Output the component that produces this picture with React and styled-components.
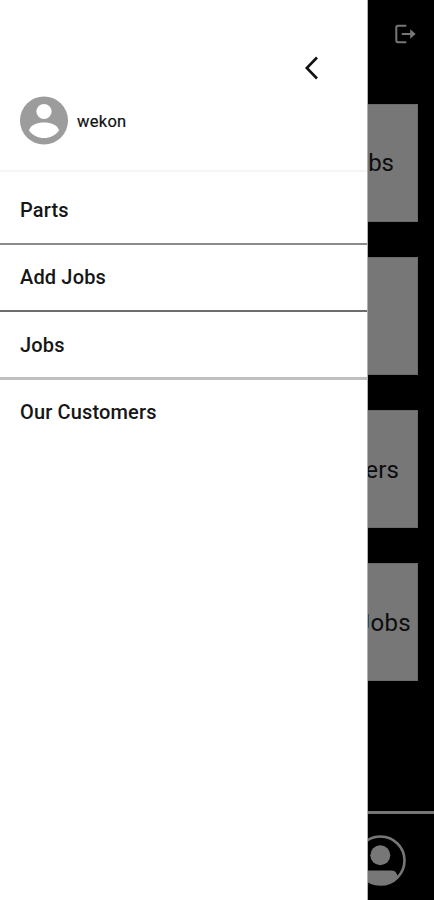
import React from "react";
import styled, { createGlobalStyle } from "styled-components";

const GlobalStyle = createGlobalStyle`
  * { box-sizing: border-box; }
  body { margin: 0; background: #000; font-family: Roboto, "Liberation Sans", sans-serif; }
`;

const Screen = styled.div`
  display: grid;
  grid-template-columns: 368px 66px;
  width: 434px;
  height: 900px;
  overflow: hidden;
`;

const Drawer = styled.nav`
  display: flex;
  flex-direction: column;
  background: #fff;
  border-right: 1px solid #b0b0b0;
`;

const DrawerTop = styled.div`
  display: flex;
  justify-content: flex-end;
  height: 96px;
  padding: 56px 47px 0 0;
`;

const Profile = styled.div`
  display: flex;
  align-items: flex-start;
  gap: 9px;
  height: 76px;
  padding-left: 20px;
  border-bottom: 2px solid #f5f5f5;
`;

const UserName = styled.span`
  font-size: 16.5px;
  line-height: 51px;
  letter-spacing: 0.3px;
  color: #111;
  -webkit-text-stroke: 0.2px #111;
`;

const MenuItem = styled.a`
  display: flex;
  align-items: center;
  height: ${(p) => p.$height}px;
  padding: ${(p) => p.$top || 0}px 0 ${(p) => p.$bottom || 0}px 20px;
  border-bottom: ${(p) => p.$line || "none"};
  font-size: 20px;
  font-weight: 500;
  letter-spacing: 0.15px;
  color: #161616;
`;

const Backdrop = styled.main`
  display: flex;
  flex-direction: column;
  overflow: hidden;
  background: #000;
`;

const Header = styled.header`
  display: flex;
  flex: none;
  height: 104px;
  padding: 24px 0 0 27px;
`;

const Cards = styled.div`
  display: flex;
  flex: none;
  flex-direction: column;
  gap: 35px;
  height: 707px;
  width: 50px;
`;

const Card = styled.div`
  display: flex;
  flex: none;
  align-items: center;
  justify-content: flex-end;
  height: 118px;
  padding: ${(p) => p.$top || 0}px ${(p) => p.$end}px 0 0;
  overflow: hidden;
  background: #777;
  border: 1px solid #6b6b6b;
  border-left: 0;
  color: #0c0c0c;
  font-size: 24px;
  letter-spacing: ${(p) => p.$spacing || 0}px;
`;

const Footer = styled.footer`
  display: flex;
  flex: 1;
  align-items: flex-start;
  padding-top: 21px;
  border-top: 3px solid #757575;
`;

const Icon = styled.svg`
  display: block;
  flex: none;
  margin-left: ${(p) => p.$shift || 0}px;
`;

const items = [
  { label: "Parts", height: 73, top: 5, line: "2px solid #8c8c8c" },
  { label: "Add Jobs", height: 67, bottom: 1, line: "2px solid #6c6c6c" },
  { label: "Jobs", height: 68, line: "3px solid #c0c0c0" },
  { label: "Our Customers", height: 64, bottom: 1 },
];

const cards = [
  { label: "bs", end: 23 },
  { label: "", end: 0 },
  { label: "ers", end: 18, spacing: 0.15, top: 1 },
  { label: "Jobs", end: 6, spacing: 0.3, top: 1 },
];

export default function App() {
  return (
    <Screen>
      <GlobalStyle />
      <Drawer>
        <DrawerTop>
          <Icon width="16" height="24" viewBox="0 0 16 24" fill="none" stroke="#111" strokeWidth="2.6">
            <path d="M13 1.5 2.8 12 13 22.5" />
          </Icon>
        </DrawerTop>
        <Profile>
          <Icon width="48" height="49" viewBox="0 0 48 49">
            <circle cx="24" cy="24.5" r="24" fill="#9c9c9c" />
            <circle cx="24" cy="15.5" r="7.6" fill="#fff" />
            <path d="M9 34.4C10.5 29 17 26.6 24 26.6S37.5 29 39 34.4C35.5 39.2 30 42 24 42S12.5 39.2 9 34.4Z" fill="#fff" />
          </Icon>
          <UserName>wekon</UserName>
        </Profile>
        {items.map((item) => (
          <MenuItem key={item.label} $height={item.height} $top={item.top} $bottom={item.bottom} $line={item.line}>
            {item.label}
          </MenuItem>
        ))}
      </Drawer>
      <Backdrop>
        <Header>
          <Icon width="22" height="20" viewBox="0 0 22 20" fill="none" stroke="#777" strokeWidth="2">
            <path d="M11.3 1.7H3Q1.3 1.7 1.3 3.4V16.6Q1.3 18.3 3 18.3H11.3M6.8 10H18" />
            <path d="M15.2 5.2 20.7 10 15.2 14.8Z" fill="#777" stroke="none" />
          </Icon>
        </Header>
        <Cards>
          {cards.map((card, i) => (
            <Card key={i} $end={card.end} $spacing={card.spacing} $top={card.top}>{card.label}</Card>
          ))}
        </Cards>
        <Footer>
          <Icon $shift={-13} width="52" height="52" viewBox="0 0 52 52">
            <circle cx="25.5" cy="25.5" r="24" fill="none" stroke="#777" strokeWidth="2.6" />
            <circle cx="25.3" cy="20.3" r="10" fill="#777" />
            <path d="M8.5 41.5Q9 35.5 14 35.5H37Q41.5 35.5 42.5 41.5Q35.5 50 25.5 50T8.5 41.5Z" fill="#777" />
          </Icon>
        </Footer>
      </Backdrop>
    </Screen>
  );
}
